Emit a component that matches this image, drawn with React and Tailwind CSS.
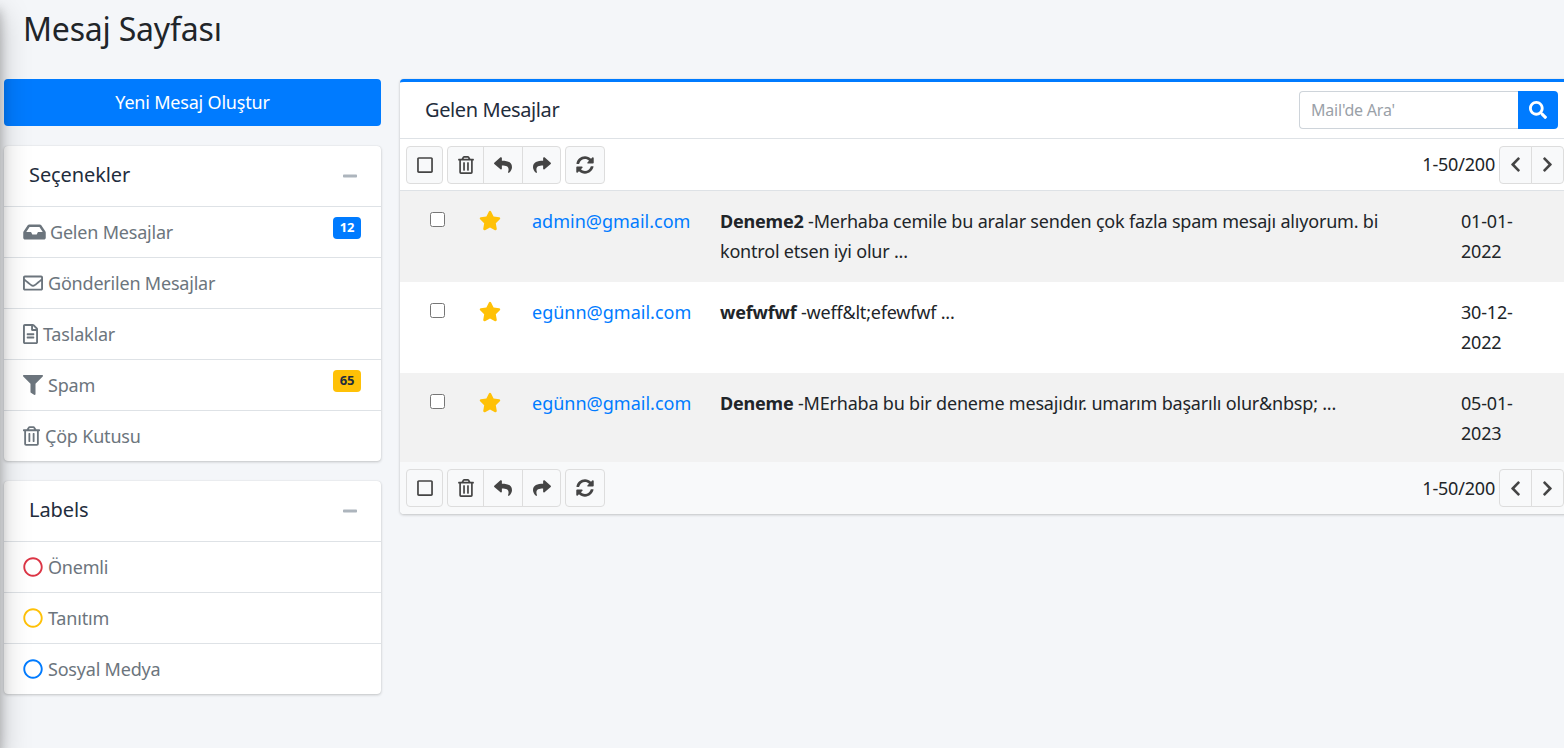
import {
  FaInbox, FaRegEnvelope, FaRegFileAlt, FaFilter, FaRegTrashAlt, FaRegSquare,
  FaReply, FaShare, FaSyncAlt, FaChevronLeft, FaChevronRight, FaStar, FaSearch, FaMinus, FaRegCircle,
} from 'react-icons/fa';

const folders = [
  { icon: <FaInbox className="w-[23px] h-[20px]" />, gap: 'gap-[4px]', label: 'Gelen Mesajlar', badge: '12', badgeCls: 'bg-[#007bff] text-white' },
  { icon: <FaRegEnvelope className="w-[20px] h-[20px]" />, gap: 'gap-[5px]', label: 'Gönderilen Mesajlar' },
  { icon: <FaRegFileAlt className="w-[15px] h-[20px]" />, gap: 'gap-[5px]', label: 'Taslaklar' },
  { icon: <FaFilter className="w-[20px] h-[20px]" />, gap: 'gap-[5px]', label: 'Spam', badge: '65', badgeCls: 'bg-[#ffc107] text-[#1f2d3d]' },
  { icon: <FaRegTrashAlt className="w-[17px] h-[20px]" />, gap: 'gap-[5px]', label: 'Çöp Kutusu' },
];

const labels = [
  { color: 'text-[#dc3545]', label: 'Önemli' },
  { color: 'text-[#ffc107]', label: 'Tanıtım' },
  { color: 'text-[#007bff]', label: 'Sosyal Medya' },
];

const messages = [
  { from: 'admin@gmail.com', subject: 'Deneme2', body: ' -Merhaba cemile bu aralar senden çok fazla spam mesajı alıyorum. bi kontrol etsen iyi olur ...', date: '01-01-2022', striped: true },
  { from: 'egünn@gmail.com', subject: 'wefwfwf', body: ' -weff&lt;efewfwf ...', date: '30-12-2022' },
  { from: 'egünn@gmail.com', subject: 'Deneme', body: ' -MErhaba bu bir deneme mesajıdır. umarım başarılı olur&nbsp; ...', date: '05-01-2023', striped: true },
];

function SideCard({ title, children }) {
  return (
    <div className="bg-white rounded-[4px] shadow-[0_0_1px_rgba(0,0,0,.125),0_1px_3px_rgba(0,0,0,.2)]">
      <div className="h-[61px] pl-[25px] pr-[23px] flex items-center justify-between border-b border-[#dee2e6] text-[#1f2d3d] text-[20px] tracking-[-0.1px]">
        <span className="-mt-[3px]">{title}</span>
        <FaMinus className="w-[16px] h-[16px] text-[#adb5bd]" />
      </div>
      {children}
    </div>
  );
}

function ToolBtn({ children, className = '' }) {
  return (
    <button className={`h-[38px] flex items-center justify-center bg-[#f8f9fa] border border-[#dddddd] text-[#444444] ${className}`}>
      {children}
    </button>
  );
}

function Toolbar({ className }) {
  return (
    <div className={`flex items-center pl-[6px] pr-[6px] ${className}`}>
      <ToolBtn className="w-[37px] rounded-[4px]"><FaRegSquare className="w-[16px] h-[18px]" /></ToolBtn>
      <div className="flex ml-[4px]">
        <ToolBtn className="w-[37px] rounded-l-[4px]"><FaRegTrashAlt className="w-[16px] h-[18px]" /></ToolBtn>
        <ToolBtn className="w-[40px] -ml-px"><FaReply className="w-[18px] h-[18px]" /></ToolBtn>
        <ToolBtn className="w-[39px] -ml-px rounded-r-[4px]"><FaShare className="w-[18px] h-[18px]" /></ToolBtn>
      </div>
      <ToolBtn className="w-[40px] ml-[4px] rounded-[4px]"><FaSyncAlt className="w-[18px] h-[18px]" /></ToolBtn>
      <span className="ml-auto text-[18px] tracking-[-0.2px] text-[#212529]">1-50/200</span>
      <div className="flex ml-[4px]">
        <ToolBtn className="w-[33px] rounded-l-[4px]"><FaChevronLeft className="w-[17px] h-[17px]" /></ToolBtn>
        <ToolBtn className="w-[33px] -ml-px rounded-r-[4px]"><FaChevronRight className="w-[17px] h-[17px]" /></ToolBtn>
      </div>
    </div>
  );
}

export default function App() {
  return (
    <div className="relative h-[748px] overflow-hidden bg-[#f4f6f9] text-[#212529] font-['Noto_Sans',sans-serif]">
      {/* collapsed sidebar shadow falling on the page */}
      <div className="absolute -left-[250px] top-0 w-[250px] h-full shadow-[0_14px_28px_rgba(0,0,0,.25),0_10px_10px_rgba(0,0,0,.22)] pointer-events-none z-10" />

      <h1 className="pl-[23px] pt-[7px] h-[79px] text-[32px] leading-[44px] tracking-[-0.2px] text-[#212529]">Mesaj Sayfası</h1>

      <div className="flex items-start pl-[4px] gap-[19px]">
        <div className="w-[377px] shrink-0 flex flex-col gap-[20px]">
          <button className="h-[47px] rounded-[4px] bg-[#007bff] text-white text-[18px] tracking-[-0.2px] text-center">Yeni Mesaj Oluştur</button>

          <SideCard title="Seçenekler">
            {folders.map((f, i) => (
              <div key={f.label} className={`relative pl-[19px] flex items-center text-[18px] tracking-[-0.2px] text-[#6c757d] ${f.gap} ${i < folders.length - 1 ? 'h-[51px] border-b border-[#dee2e6]' : 'h-[50px]'}`}>
                {f.icon}
                <span>{f.label}</span>
                {f.badge && (
                  <span className={`absolute right-[20px] top-[10px] w-[28px] h-[22px] rounded-[4px] flex items-center justify-center text-[13px] font-bold ${f.badgeCls}`}>{f.badge}</span>
                )}
              </div>
            ))}
          </SideCard>

          <SideCard title="Labels">
            {labels.map((l, i) => (
              <div key={l.label} className={`pl-[19px] flex items-center gap-[5px] text-[18px] tracking-[-0.2px] text-[#6c757d] ${i < labels.length - 1 ? 'h-[51px] border-b border-[#dee2e6]' : 'h-[50px]'}`}>
                <FaRegCircle className={`w-[20px] h-[20px] ${l.color}`} />
                <span>{l.label}</span>
              </div>
            ))}
          </SideCard>
        </div>

        <div className="w-[1170px] shrink-0 bg-white rounded-[4px] border-t-[3px] border-[#007bff] shadow-[0_0_1px_rgba(0,0,0,.125),0_1px_3px_rgba(0,0,0,.2)]">
          <div className="h-[57px] pl-[25px] pr-[12px] flex items-center justify-between border-b border-[#dee2e6]">
            <span className="text-[20px] tracking-[-0.4px] text-[#1f2d3d]">Gelen Mesajlar</span>
            <div className="flex">
              <input
                placeholder="Mail'de Ara'"
                className="w-[219px] h-[38px] px-[11px] text-[16px] tracking-[-0.2px] bg-white border border-[#ced4da] border-r-0 rounded-l-[4px] placeholder:text-[#9aa1a8] outline-none"
              />
              <button className="w-[40px] h-[38px] bg-[#007bff] rounded-r-[4px] flex items-center justify-center text-white">
                <FaSearch className="w-[18px] h-[18px]" />
              </button>
            </div>
          </div>

          <Toolbar className="h-[52px] border-b border-[#dee2e6]" />

          {messages.map((m, i) => (
            <div
              key={m.subject}
              className={`grid grid-cols-[132px_188px_741px_1fr] pt-[15px] text-[18px] leading-[30px] tracking-[-0.2px] ${i < messages.length - 1 ? 'pb-[16px]' : 'pb-[14px]'} ${m.striped ? 'bg-[#f2f2f2]' : 'bg-white'}`}
            >
              <div className="flex items-start">
                <input type="checkbox" className="ml-[30px] mt-[6px] w-[15px] h-[15px] accent-[#007bff]" />
                <FaStar className="ml-[34px] mt-[4px] w-[22px] h-[21px] text-[#ffc107]" />
              </div>
              <span className="text-[#007bff] tracking-normal">{m.from}</span>
              <div className="pr-[50px]"><b>{m.subject}</b>{m.body}</div>
              <div>{m.date.slice(0, 6)}<br />{m.date.slice(6)}</div>
            </div>
          ))}

          <Toolbar className="h-[52px] bg-[#f8f9fa] rounded-b-[4px]" />
        </div>
      </div>
    </div>
  );
}
